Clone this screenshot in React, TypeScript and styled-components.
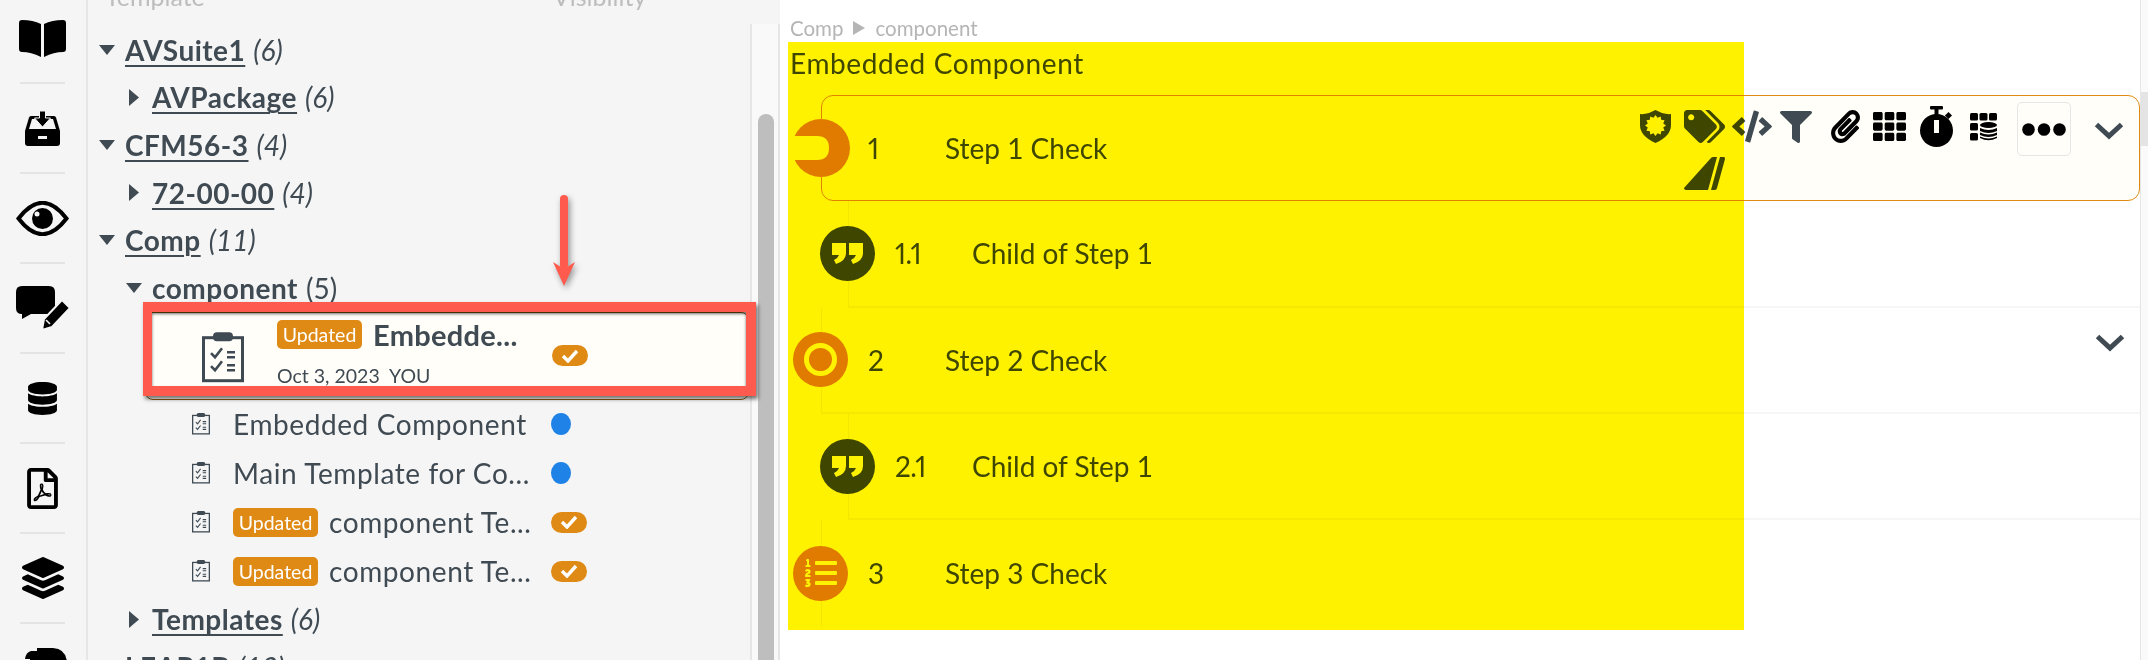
import styled, { createGlobalStyle } from 'styled-components';
import {
  FaCode,
  FaDatabase,
  FaFilter,
  FaLayerGroup,
  FaListOl,
  FaPaperclip,
  FaRegFilePdf,
  FaTags,
  FaTh,
} from 'react-icons/fa';

const INK = '#3f4a53';
const ORANGE = '#df8a14';

const GlobalStyle = createGlobalStyle`
  html, body {
    margin: 0;
    padding: 0;
    height: 660px;
    overflow: hidden;
    background: #fff;
  }
  body {
    font-family: 'Lato', 'Open Sans', sans-serif;
    color: ${INK};
  }
`;

const BookIcon = () => (
  <svg width="47" height="37" viewBox="0 0 47 37">
    <path d="M0 3 Q0 0 3 0 Q14 0 22 4 V37 Q12 32 3 32 Q0 32 0 29z" fill="#000" />
    <path d="M47 3 Q47 0 44 0 Q33 0 25 4 V37 Q35 32 44 32 Q47 32 47 29z" fill="#000" />
  </svg>
);

const InboxIcon = () => (
  <svg width="35" height="35" viewBox="0 0 35 35">
    <path
      d="M6 5 H29 Q30.5 5 31 6.5 L35 20 V32 Q35 35 32 35 H3 Q0 35 0 32 V20 L4 6.5 Q4.5 5 6 5z"
      fill="#000"
    />
    <path d="M7 8 H28 L31 18 H4z" fill="#f5f5f5" />
    <path
      d="M14.5 0 H20.5 V7 H25.5 L17.5 16 L9.5 7 H14.5z"
      fill="#000"
      stroke="#f5f5f5"
      strokeWidth="1"
    />
    <rect x="13" y="25" width="9" height="3" fill="#f5f5f5" />
  </svg>
);

const EyeIcon = () => (
  <svg width="53" height="35" viewBox="0 0 53 35">
    <path
      d="M2.5 17.5 Q26.5 -14 50.5 17.5 Q26.5 49 2.5 17.5z"
      fill="none"
      stroke="#000"
      strokeWidth="4"
    />
    <circle cx="26.5" cy="17.5" r="10.5" fill="#000" />
    <circle cx="21" cy="13" r="2.5" fill="#f5f5f5" />
  </svg>
);

const CommentEditIcon = () => (
  <svg width="54" height="44" viewBox="0 0 54 44">
    <path
      d="M6 0 H33 Q39 0 39 6 V22 Q39 28 33 28 H15 L6 33 V28 Q0 28 0 22 V6 Q0 0 6 0z"
      fill="#000"
    />
    <path d="M26 44 L28 33 L46 14 L54 22 L36 41z" fill="#000" stroke="#f5f5f5" strokeWidth="2" />
    <path d="M30 34 L34 38" stroke="#f5f5f5" strokeWidth="1.6" />
  </svg>
);

const LastRailIcon = () => (
  <svg width="42" height="34" viewBox="0 0 42 34">
    <path d="M12 0 H28 Q42 1 42 16 V34 H5 V11 H0 Q1 4 6 3 L12 3z" fill="#000" />
  </svg>
);

const ClipboardIcon = ({ size }: { size: number }) => (
  <svg width={size} height={size * 1.2} viewBox="0 0 42 50">
    <rect x="1.5" y="5.5" width="39" height="43" fill="none" stroke={INK} strokeWidth="3" />
    <rect x="11" y="0" width="20" height="9" rx="4" fill={INK} />
    <path d="M9 21 L13 25 L20 16 M9 34 L13 38 L20 29" fill="none" stroke={INK} strokeWidth="2.6" />
    <path d="M25 20 H33 M25 25 H33 M25 33 H33 M25 38 H33" stroke={INK} strokeWidth="2.6" />
  </svg>
);

const burst = Array.from({ length: 24 }, (_, i) => {
  const r = i % 2 ? 8 : 10.5;
  const a = (i * Math.PI) / 12;
  return `${15.5 + r * Math.cos(a)},${15.5 + r * Math.sin(a)}`;
}).join(' ');

const ShieldIcon = () => (
  <svg width="31" height="33" viewBox="0 0 31 33">
    <path
      d="M15.5 0 L22 3 Q27 4.5 31 4 V15 Q31 26 15.5 33 Q0 26 0 15 V4 Q4 4.5 9 3z"
      fill={INK}
    />
    <polygon points={burst} fill="#fffef8" />
  </svg>
);

const TailIcon = () => (
  <svg width="41" height="33" viewBox="0 0 41 33">
    <path d="M0 31 L27 1 Q28 0 29 0 H33 L24 33 H2 Q0 33 0 31z" fill={INK} />
    <path d="M36 0 H40 Q41 0 41 2 L33 31 Q32.5 33 31 33 H27z" fill={INK} />
  </svg>
);

const StopwatchIcon = () => (
  <svg width="33" height="41" viewBox="0 0 33 41">
    <rect x="10" y="0" width="13" height="3.5" rx="1" fill="#000" />
    <rect x="14.5" y="3" width="4" height="7" fill="#000" />
    <rect x="26" y="7" width="5" height="5" transform="rotate(45 28.5 9.5)" fill="#000" />
    <circle cx="16.5" cy="24.5" r="16.5" fill="#000" />
    <rect x="14" y="14" width="5" height="13" fill="#fffef8" />
  </svg>
);

const DataTableIcon = () => (
  <svg width="27" height="28" viewBox="0 0 27 28">
    <rect x="0" y="0" width="8" height="7.5" rx="1.5" fill="#000" />
    <rect x="9.5" y="0" width="8" height="7.5" rx="1.5" fill="#000" />
    <rect x="19" y="0" width="8" height="7.5" rx="1.5" fill="#000" />
    <rect x="0" y="10" width="8" height="7.5" rx="1.5" fill="#000" />
    <rect x="0" y="20" width="8" height="7.5" rx="1.5" fill="#000" />
    <ellipse cx="18.5" cy="12" rx="8.5" ry="3" fill="#000" />
    <path d="M10 15 Q18.5 19 27 15 V18 Q18.5 22 10 18z" fill="#000" />
    <path d="M10 19.5 Q18.5 23.5 27 19.5 V22 Q18.5 26 10 22z" fill="#000" />
    <path d="M10 23.5 Q18.5 27.5 27 23.5 V25 Q18.5 29.5 10 25z" fill="#000" />
  </svg>
);

const DotsIcon = () => (
  <svg width="44" height="13" viewBox="0 0 44 13">
    <circle cx="6.5" cy="6.5" r="6.3" fill="#000" />
    <circle cx="22" cy="6.5" r="6.3" fill="#000" />
    <circle cx="37.5" cy="6.5" r="6.3" fill="#000" />
  </svg>
);

const ChevronIcon = () => (
  <svg width="30" height="18" viewBox="0 0 30 18">
    <path d="M2.5 2.5 L15 14 L27.5 2.5" fill="none" stroke={INK} strokeWidth="5" />
  </svg>
);

const QuoteIcon = () => (
  <svg width="31" height="21" viewBox="0 0 31 21">
    <path d="M0 0 H14 V10 Q14 18 4 21 L2 17 Q6 15 7 12 H0z" fill="#fff" />
    <path d="M17 0 H31 V10 Q31 18 21 21 L19 17 Q23 15 24 12 H17z" fill="#fff" />
  </svg>
);

const HalfRingIcon = () => (
  <svg width="58" height="58" viewBox="0 0 58 58">
    <circle cx="29" cy="29" r="29" fill="#e08200" />
    <path d="M0 17 H25 Q37 17 37 29 Q37 41 25 41 H0z" fill="#fff" />
  </svg>
);

const RingIcon = () => (
  <svg width="33" height="33" viewBox="0 0 33 33">
    <circle cx="16.5" cy="16.5" r="14" fill="none" stroke="#fff" strokeWidth="5" />
  </svg>
);

const Caret = ({ open }: { open: boolean }) =>
  open ? (
    <svg width="16" height="10" viewBox="0 0 16 10">
      <path d="M0 0 H16 L8 10z" fill={INK} />
    </svg>
  ) : (
    <svg width="10" height="17" viewBox="0 0 10 17">
      <path d="M0 0 L10 8.5 L0 17z" fill={INK} />
    </svg>
  );

const CheckPill = () => (
  <Pill>
    <svg width="18" height="14" viewBox="0 0 18 14">
      <path d="M2 7 L7 12 L16 2" fill="none" stroke="#fff" strokeWidth="3.4" />
    </svg>
  </Pill>
);

const railItems = [
  <BookIcon />,
  <InboxIcon />,
  <EyeIcon />,
  <CommentEditIcon />,
  <FaDatabase size={33} />,
  <FaRegFilePdf size={41} />,
  <FaLayerGroup size={42} />,
];

const folders = [
  { level: 0, open: true, name: 'AVSuite1', count: '(6)' },
  { level: 1, open: false, name: 'AVPackage', count: '(6)' },
  { level: 0, open: true, name: 'CFM56-3', count: '(4)' },
  { level: 1, open: false, name: '72-00-00', count: '(4)' },
  { level: 0, open: true, name: 'Comp', count: '(11)' },
  { level: 1, open: true, name: 'component', count: '(5)', plain: true },
];

const leaves = [
  { name: 'Embedded Component', updated: false },
  { name: 'Main Template for Co...', updated: false },
  { name: 'component Te...', updated: true },
  { name: 'component Te...', updated: true },
];

const steps = [
  { num: '1', label: 'Step 1 Check', kind: 'half', active: true },
  { num: '1.1', label: 'Child of Step 1', kind: 'quote', child: true },
  { num: '2', label: 'Step 2 Check', kind: 'ring', chevron: true },
  { num: '2.1', label: 'Child of Step 1', kind: 'quote', child: true },
  { num: '3', label: 'Step 3 Check', kind: 'list' },
];

const stepMarker = (kind: string) => {
  if (kind === 'half')
    return (
      <Marker $bare>
        <HalfRingIcon />
      </Marker>
    );
  if (kind === 'quote')
    return (
      <Marker $dark>
        <QuoteIcon />
      </Marker>
    );
  if (kind === 'ring')
    return (
      <Marker>
        <RingIcon />
      </Marker>
    );
  return (
    <Marker>
      <FaListOl size={32} color="#fff" />
    </Marker>
  );
};

const App = () => {
  return (
    <Page>
      <GlobalStyle />
      <Rail>
        {railItems.map((icon, i) => (
          <RailItem key={i}>{icon}</RailItem>
        ))}
        <RailItem>
          <LastRailIcon />
        </RailItem>
      </Rail>
      <TreePanel>
        <TreeHead>
          <HeadLabel>Template</HeadLabel>
          <HeadLabel>Visibility</HeadLabel>
        </TreeHead>
        <TreeScroll>
          <Tree>
            {folders.map((f) => (
              <FolderRow key={f.name} $level={f.level}>
                <CaretBox>
                  <Caret open={f.open} />
                </CaretBox>
                <FolderName>{f.name}</FolderName>
                <FolderCount $plain={f.plain}>{f.count}</FolderCount>
              </FolderRow>
            ))}
            <SelectedRow>
              <SelectedIcon>
                <ClipboardIcon size={42} />
              </SelectedIcon>
              <SelectedInfo>
                <SelectedTop>
                  <Badge>Updated</Badge>
                  <SelectedName>Embedde...</SelectedName>
                </SelectedTop>
                <SelectedMeta>Oct 3, 2023&nbsp;&nbsp;YOU</SelectedMeta>
              </SelectedInfo>
              <CheckPill />
            </SelectedRow>
            {leaves.map((leaf, i) => (
              <LeafRow key={i}>
                <LeafIcon>
                  <ClipboardIcon size={18} />
                </LeafIcon>
                <LeafName>
                  {leaf.updated && <Badge>Updated</Badge>}
                  {leaf.name}
                </LeafName>
                {leaf.updated ? <CheckPill /> : <BlueDot />}
              </LeafRow>
            ))}
            <FolderRow $level={1}>
              <CaretBox>
                <Caret open={false} />
              </CaretBox>
              <FolderName>Templates</FolderName>
              <FolderCount>(6)</FolderCount>
            </FolderRow>
            <FolderRow $level={0}>
              <CaretBox />
              <FolderName>LEAP1B</FolderName>
              <FolderCount>(12)</FolderCount>
            </FolderRow>
          </Tree>
          <TreeTrack>
            <TreeThumb />
          </TreeTrack>
        </TreeScroll>
      </TreePanel>
      <Main>
        <MainBody>
          <Crumbs>
            Comp
            <CrumbArrow />
            component
          </Crumbs>
          <Title>Embedded Component</Title>
          <Steps>
            {steps.map((s) => (
              <StepRow key={s.num} $child={s.child} $active={s.active}>
                {stepMarker(s.kind)}
                <StepNum>{s.num}</StepNum>
                <StepLabel>{s.label}</StepLabel>
                {s.active && (
                  <Actions>
                    <ToolGrid>
                      <ToolCell>
                        <ShieldIcon />
                      </ToolCell>
                      <ToolCell>
                        <FaTags size={33} color={INK} style={{ width: 41 }} />
                      </ToolCell>
                      <ToolCell>
                        <FaCode size={33} color={INK} style={{ width: 40 }} />
                      </ToolCell>
                      <ToolCell>
                        <FaFilter size={32} color={INK} />
                      </ToolCell>
                      <ToolCell>
                        <FaPaperclip size={33} color="#000" />
                      </ToolCell>
                      <ToolCell>
                        <FaTh size={33} color="#000" />
                      </ToolCell>
                      <ToolCell>
                        <StopwatchIcon />
                      </ToolCell>
                      <ToolCell>
                        <DataTableIcon />
                      </ToolCell>
                      <ToolCell />
                      <ToolCell>
                        <TailIcon />
                      </ToolCell>
                    </ToolGrid>
                    <MoreButton>
                      <DotsIcon />
                    </MoreButton>
                    <ChevronBox>
                      <ChevronIcon />
                    </ChevronBox>
                  </Actions>
                )}
                {s.chevron && (
                  <Actions>
                    <ChevronBox>
                      <ChevronIcon />
                    </ChevronBox>
                  </Actions>
                )}
              </StepRow>
            ))}
          </Steps>
        </MainBody>
        <PageTrack>
          <PageThumb />
        </PageTrack>
      </Main>
      <Callout />
      <CalloutArrow width="24" height="92" viewBox="0 0 24 92">
        <path d="M12 4 V70" stroke="#ff5a4e" strokeWidth="8" strokeLinecap="round" />
        <path d="M1 67 L12 74 L23 67 L12 91z" fill="#ff5a4e" />
      </CalloutArrow>
      <Highlighter />
    </Page>
  );
};

export default App;

const Page = styled.div`
  position: relative;
  display: flex;
  width: 2148px;
  height: 660px;
  overflow: hidden;
`;

const Rail = styled.nav`
  flex: 0 0 88px;
  box-sizing: border-box;
  height: 660px;
  overflow: hidden;
  background: #f5f5f5;
  border-right: 2px solid #e6e6e6;
`;

const RailItem = styled.div`
  box-sizing: border-box;
  height: 90px;
  display: flex;
  align-items: center;
  justify-content: center;
  color: #000;
  border-bottom: 2px solid #e4e4e4;
  margin: 0 21px 0 20px;
  svg {
    flex-shrink: 0;
  }
  &:first-child {
    margin-top: -6px;
  }
  &:last-child {
    border-bottom: none;
    align-items: flex-start;
    padding-top: 24px;
    margin: 0 18px 0 24px;
  }
`;

const TreePanel = styled.section`
  flex: 0 0 692px;
  display: flex;
  flex-direction: column;
  height: 660px;
  background: #f5f5f5;
`;

const TreeHead = styled.div`
  flex: 0 0 24px;
  overflow: hidden;
  display: flex;
  padding-left: 17px;
  gap: 348px;
`;

const HeadLabel = styled.span`
  font-size: 25px;
  line-height: 28px;
  margin-top: -18px;
  color: #bdbdbd;
`;

const TreeScroll = styled.div`
  flex: 1;
  min-height: 0;
  display: flex;
`;

const Tree = styled.div`
  flex: 0 0 662px;
  padding-top: 2px;
  overflow: hidden;
`;

const FolderRow = styled.div<{ $level: number }>`
  height: 47.6px;
  display: flex;
  align-items: center;
  padding-left: ${(p) => 10 + p.$level * 27}px;
`;

const CaretBox = styled.span`
  flex: 0 0 18px;
  margin-right: 9px;
  display: flex;
  justify-content: center;
`;

const FolderName = styled.span`
  font-size: 28px;
  font-weight: 700;
  letter-spacing: 0.5px;
  text-decoration: underline;
  text-decoration-thickness: 2px;
  text-underline-offset: 4px;
`;

const FolderCount = styled.span<{ $plain?: boolean }>`
  font-size: 28px;
  margin-left: 8px;
  font-style: ${(p) => (p.$plain ? 'normal' : 'italic')};
`;

const SelectedRow = styled.div`
  box-sizing: border-box;
  height: 88px;
  margin: 0 1px 0 57px;
  display: flex;
  align-items: center;
  padding-left: 56px;
  background: #fffef8;
  border: 1px solid #8a5a10;
  border-radius: 8px;
`;

const SelectedIcon = styled.span`
  flex: 0 0 75px;
  display: flex;
  padding-top: 4px;
`;

const SelectedInfo = styled.div`
  flex: 0 0 275px;
  align-self: flex-start;
  display: flex;
  flex-direction: column;
  gap: 17px;
  padding-top: 7px;
`;

const SelectedTop = styled.div`
  display: flex;
  align-items: center;
  height: 29px;
`;

const Badge = styled.span`
  display: inline-flex;
  align-items: center;
  justify-content: center;
  flex: 0 0 85px;
  width: 85px;
  height: 29px;
  margin-right: 11px;
  border-radius: 5px;
  background: ${ORANGE};
  color: #fff;
  font-size: 19.5px;
  font-weight: 400;
  letter-spacing: 0;
`;

const SelectedName = styled.span`
  font-size: 29px;
  line-height: 29px;
  font-weight: 700;
  letter-spacing: 0.3px;
`;

const SelectedMeta = styled.span`
  font-size: 19.5px;
  line-height: 20px;
`;

const LeafRow = styled.div`
  height: 49px;
  display: flex;
  align-items: center;
  padding-left: 104px;
`;

const LeafIcon = styled.span`
  flex: 0 0 41px;
  display: flex;
`;

const LeafName = styled.span`
  flex: 0 0 318px;
  display: flex;
  align-items: center;
  font-size: 28px;
  letter-spacing: 0.6px;
  white-space: nowrap;
`;

const Pill = styled.span`
  width: 36px;
  height: 21px;
  border-radius: 11px;
  background: ${ORANGE};
  display: flex;
  align-items: center;
  justify-content: center;
`;

const BlueDot = styled.span`
  width: 20px;
  height: 22px;
  border-radius: 50%;
  background: #1e82e6;
`;

const TreeTrack = styled.div`
  flex: 0 0 30px;
  box-sizing: border-box;
  background: #f9f9f9;
  border-left: 2px solid #e6e6e6;
  border-right: 2px solid #e6e6e6;
  padding: 90px 4px 0 6px;
`;

const TreeThumb = styled.div`
  height: 560px;
  width: 16px;
  border-radius: 8px 8px 0 0;
  background: #bebebe;
`;

const Main = styled.main`
  flex: 1;
  display: flex;
  min-width: 0;
  background: #fff;
`;

const MainBody = styled.div`
  flex: 1;
  min-width: 0;
  padding-top: 18px;
`;

const Crumbs = styled.div`
  display: flex;
  align-items: center;
  height: 20px;
  padding-left: 10px;
  font-size: 20.5px;
  color: #b5b5b5;
`;

const CrumbArrow = styled.span`
  width: 0;
  height: 0;
  margin: 0 10px;
  border-left: 12px solid #b5b5b5;
  border-top: 7px solid transparent;
  border-bottom: 7px solid transparent;
`;

const Title = styled.h1`
  margin: 7px 0 15px;
  padding-left: 10px;
  height: 35px;
  line-height: 36px;
  font-size: 28px;
  font-weight: 400;
  letter-spacing: 0.6px;
`;

const Steps = styled.div`
  padding-left: 41px;
`;

const StepRow = styled.div<{ $child?: boolean; $active?: boolean }>`
  box-sizing: border-box;
  height: 106.3px;
  display: flex;
  align-items: center;
  margin-left: ${(p) => (p.$child ? 27 : 0)}px;
  border-left: 1px solid ${(p) => (p.$active ? ORANGE : '#f3f3f3')};
  border-bottom: ${(p) => (p.$active ? `1px solid ${ORANGE}` : '2px solid #f6f6f6')};
  border-top: ${(p) => (p.$active ? `1px solid ${ORANGE}` : 'none')};
  border-right: ${(p) => (p.$active ? `1px solid ${ORANGE}` : 'none')};
  border-radius: ${(p) => (p.$active ? '12px' : '0')};
  background: ${(p) => (p.$active ? '#fffef8' : 'transparent')};
  &:last-child {
    border-bottom: none;
  }
`;

const Marker = styled.span<{ $dark?: boolean; $bare?: boolean }>`
  flex: 0 0 55px;
  min-width: 0;
  height: 55px;
  margin-left: -29px;
  margin-right: 20px;
  border-radius: 50%;
  display: flex;
  align-items: center;
  justify-content: center;
  background: ${(p) => (p.$bare ? 'transparent' : p.$dark ? INK : '#e08200')};
  svg {
    flex-shrink: 0;
  }
`;

const StepNum = styled.span`
  flex: 0 0 77px;
  font-size: 28px;
  font-variant-numeric: proportional-nums;
  letter-spacing: -0.5px;
`;

const StepLabel = styled.span`
  font-size: 28px;
`;

const Actions = styled.div`
  margin-left: auto;
  align-self: flex-start;
  display: flex;
  align-items: flex-start;
  padding-top: 6px;
`;

const ToolGrid = styled.div`
  display: grid;
  grid-template-columns: 44px 48px 48px 49px 44px 47px 50px 47px;
  grid-auto-rows: 49px 33px;
  row-gap: 6px;
`;

const ToolCell = styled.span`
  display: flex;
  align-items: center;
`;

const MoreButton = styled.span`
  box-sizing: border-box;
  width: 54px;
  height: 54px;
  display: flex;
  align-items: center;
  justify-content: center;
  border: 1px solid #e6e6e6;
  border-radius: 5px;
  background: #fffef8;
`;

const ChevronBox = styled.span`
  display: flex;
  margin: 20px 15px 0 23px;
`;

const PageTrack = styled.div`
  flex: 0 0 8px;
  box-sizing: border-box;
  background: #fafafa;
  border-left: 1px solid #e6e6e6;
  padding-top: 92px;
`;

const PageThumb = styled.div`
  height: 54px;
  background: #e4e4e4;
`;

const Callout = styled.div`
  position: absolute;
  left: 143px;
  top: 302px;
  width: 613px;
  height: 94px;
  box-sizing: border-box;
  border: 10px solid #ff5a4e;
  border-left-width: 9px;
  box-shadow:
    2px 3px 4px rgba(0, 0, 0, 0.55),
    inset 0 2px 3px rgba(0, 0, 0, 0.55);
`;

const CalloutArrow = styled.svg`
  position: absolute;
  left: 552px;
  top: 195px;
  filter: drop-shadow(2px 3px 3px rgba(0, 0, 0, 0.4));
`;

const Highlighter = styled.div`
  position: absolute;
  left: 788px;
  top: 42px;
  width: 956px;
  height: 588px;
  background: #fff200;
  mix-blend-mode: multiply;
`;
